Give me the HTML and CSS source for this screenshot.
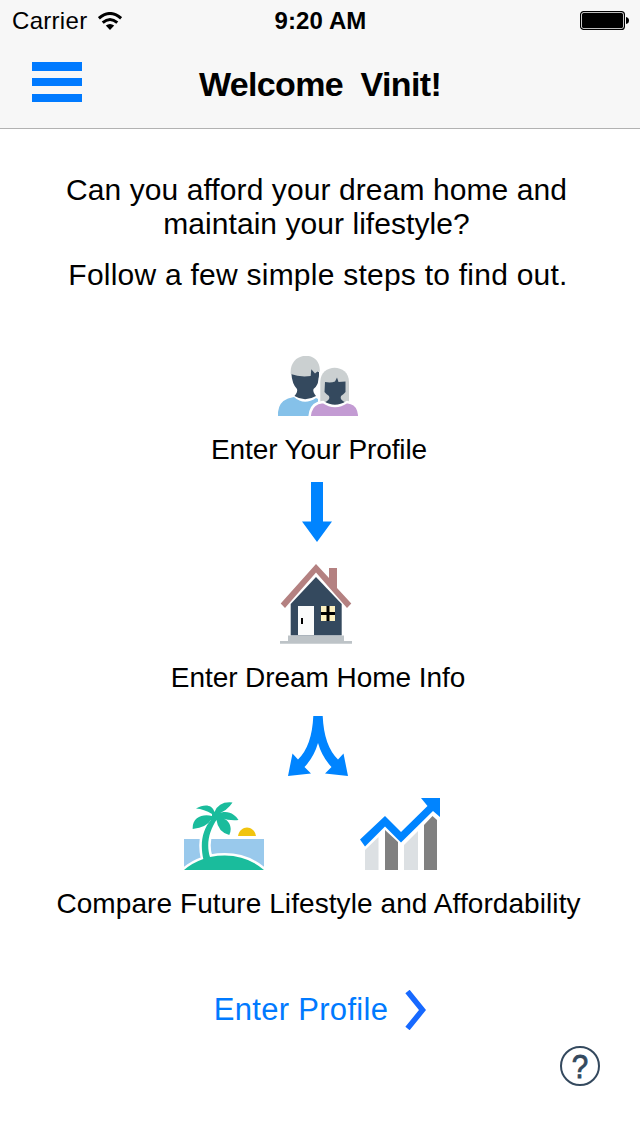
FILE: index.html
```html
<!DOCTYPE html>
<html lang="en">
<head>
<meta charset="utf-8">
<title>Welcome</title>
<link rel="stylesheet" href="styles.css">
</head>
<body>
<header class="header">
  <div class="status">
    <div class="carrier"><span class="carrier-name">Carrier</span>
      <svg class="wifi" width="24" height="18" viewBox="0 0 24 18"><g fill="none" stroke="#000" stroke-width="3"><path d="M.9 6.3Q12-3.3 23.1 6.3"/><path d="M4.7 10.6Q12 4.3 19.3 10.6"/></g><path d="M7.8 13.6Q12 10.3 16.2 13.6L12 18z"/></svg>
    </div>
    <span class="clock">9:20 AM</span>
    <svg class="battery" width="49" height="19" viewBox="0 0 49 19"><rect x=".6" y=".6" width="43.8" height="17.8" rx="3" fill="#fff" stroke="#000" stroke-width="1.2"/><rect x="2" y="2" width="41" height="15" rx="1.5"/><path d="M46 6q3 .5 3 3.5t-3 3.5z"/></svg>
  </div>
  <div class="nav">
    <button class="menu" aria-label="Menu"><i></i><i></i><i></i></button>
    <h1 class="title">Welcome&nbsp; Vinit!</h1>
  </div>
</header>
<main class="content">
  <div class="intro">
    <p class="line line-can">Can you afford your dream home and</p>
    <p class="line line-maintain">maintain your lifestyle?</p>
    <p class="line line-follow">Follow a few simple steps to find out.</p>
  </div>
  <svg class="people" width="80" height="60" viewBox="0 0 80 60">
    <path fill="#85c1e9" d="M0 60V56Q1 46 10 42.500L16 41Q26 50 38 42L40 43V47Q34 49 32 60z"/>
    <path fill="#34495e" d="M13.300 17H32V12L41 16V19Q41 29 35.500 33Q34.500 36 38 40Q27 46.500 16.500 40Q20 36 19 33Q14 28 13.300 17"/>
    <path fill="#cbd0d1" d="M12.700 18C11-6 44-6 41.700 16L40 15 37 17.500 33.300 13.300 32.700 20Q22 21.500 12.700 18"/>
    <path fill="#cbd0d1" stroke="#fff" stroke-width="4" paint-order="stroke" d="M42.300 47V26C42.300 7 71 7 71 26V47Q57 50 42.300 47"/>
    <path fill="#34495e" d="M47 26Q53 27 57 25.500L59 21.500 60.500 26 67.500 25.500V36Q66 38 63 40Q61 44 69 47Q57 54 45 47Q53 44 51 40Q48 38 46.500 36z"/>
    <path fill="#c39bd3" stroke="#fff" stroke-width="2.500" d="M31.500 62Q32 50 40 47L45 46Q57 54 69 46L73 47Q81 49 81.500 62z"/>
  </svg>
  <p class="label label-profile">Enter Your Profile</p>
  <svg class="arrow" width="30" height="60" viewBox="0 0 30 60"><path fill="#0084ff" d="M9 0H21V39.500H30L15 60 0 39.500H9z"/></svg>
  <svg class="house" width="72" height="80" viewBox="0 0 72 80">
    <path fill="#34495e" d="M36 13 10.700 40V71.500H61.700V40z"/>
    <path fill="#b48181" d="M49 4H57V24L71.300 39.500 67 44 36 8.500 5 44 .7 39.500 36 0 49 14z"/>
    <path fill="#fafbfb" d="M18 42H34V71H18z"/><path d="M21 54H23V60H21z"/>
    <path fill="#fdf1c0" d="M41 42H55V57H41z"/><path d="M46.500 42H49.500V57H46.500zM41 48H55V51H41z"/>
    <path fill="#bdc3c7" d="M8 71.500H64V77H72V79.700H0V77H8z"/>
  </svg>
  <p class="label label-home">Enter Dream Home Info</p>
  <svg class="fork" width="60" height="60" viewBox="0 0 60 60"><path fill="#0084ff" d="M25.300 0H34.700Q36 30 50 43.500L55.500 37.500 60 60 37 57.500 43.500 51Q34 41 30 27Q26 41 16.500 51L23 57.500 0 60 4.500 37.500 10 43.500Q24 30 25.300 0z"/></svg>
  <div class="compare">
    <svg class="beach" width="80" height="68" viewBox="0 0 80 68">
      <path fill="#99c9ec" d="M0 37H80V68H0z"/>
      <path fill="#f1c40f" d="M54 34C56 22.500 70 22.500 72 34z"/>
      <g stroke="#fff" stroke-width="5" paint-order="stroke" fill="#1abc9c">
        <path d="M0 68Q8 61 19.300 57C16 42 18 28 27 18L33 17C25 29 22 42 26 55Q58 49 80 68z"/>
      </g>
      <path fill="#1abc9c" d="M28 12Q20 7 12 6.500C20 2 28 2 30.500 10Q35-1 48.500 .5Q43 9 34 11.500C44 7 52 13 54.500 18Q46 19 37 16C45 17 49 25 45.300 33Q34 30 32.500 18L30 20 27 18Q23 25 8.700 27C8 15 19 11.500 28 14z"/>
    </svg>
    <svg class="chart" width="80" height="72" viewBox="0 0 80 72">
      <path fill="#dce0e3" d="M5 52 18.500 39V72H5zM44 47 58 33V72H44z"/>
      <path fill="#808080" d="M25 32 38 44V72H25zM64 27 72.500 18 77 22V72H64z"/>
      <path fill="#0084ff" d="M0 41.500 25 18 41 34 67.500 8 61 0H80V19L73 13 41 44.500 25 28.500 5 48.500z"/>
    </svg>
  </div>
  <p class="label label-compare">Compare Future Lifestyle and Affordability</p>
  <a class="next"><span class="next-text">Enter Profile</span><svg width="21" height="40" viewBox="0 0 21 40"><path d="M2.500 1.500 17.500 20 2.500 38.500" fill="none" stroke="#1769ff" stroke-width="5.500"/></svg></a>
</main>
<footer class="footer"><button class="help" aria-label="Help"><span class="help-mark">?</span></button></footer>
</body>
</html>
```

FILE: styles.css
```css
* { box-sizing: border-box; }
body { margin: 0; width: 640px; height: 1136px; overflow: hidden; background: #fff; color: #000; font-family: "Liberation Sans", Arial, sans-serif; }
p, h1 { margin: 0; white-space: nowrap; }
svg { display: block; flex: none; }
button { border: 0; padding: 0; background: none; }
.header { height: 129px; background: #f7f7f7; border-bottom: 1px solid #b2b2b2; }
.status { height: 40px; display: grid; grid-template-columns: 1fr auto 1fr; align-items: center; padding: 1px 11px 0 12px; }
.carrier { display: flex; align-items: center; gap: 11px; font-size: 24px; letter-spacing: 0.3px; }
.clock { font-size: 24px; font-weight: bold; letter-spacing: 0.1px; }
.battery { justify-self: end; }
.nav { height: 88px; display: grid; grid-template-columns: 82px 1fr 82px; align-items: center; }
.menu { width: 50px; height: 40px; margin: -4px 0 0 32px; display: flex; flex-direction: column; justify-content: space-between; }
.menu i { height: 8.500px; background: #007aff; }
.title { font-size: 34px; line-height: 40px; text-align: center; letter-spacing: -0.65px; }
.content { width: 636px; display: flex; flex-direction: column; align-items: center; padding-top: 44px; }
.intro { font-size: 30px; line-height: 34px; display: flex; flex-direction: column; align-items: center; }
.line-can { letter-spacing: 0.09px; margin-right: 3px; }
.line-maintain { letter-spacing: 0.05px; margin-right: 3px; }
.line-follow { margin-top: 17px; letter-spacing: 0.24px; }
.people { margin-top: 64px; }
.label { font-size: 28px; line-height: 34px; }
.label-profile { margin-top: 17px; margin-left: 2px; letter-spacing: -0.1px; }
.arrow { margin-top: 15px; margin-right: 2px; }
.house { margin-top: 22px; margin-right: 4px; }
.label-home { margin-top: 17px; letter-spacing: -0.06px; }
.fork { margin-top: 21px; }
.compare { display: flex; align-items: flex-end; gap: 96px; margin-top: 22px; margin-right: 12px; }
.label-compare { margin-top: 17px; margin-left: 1px; letter-spacing: 0.08px; }
.next { display: flex; align-items: center; gap: 17px; margin: 69px 0 0 4px; font-size: 31px; line-height: 38px; letter-spacing: 0.3px; color: #007aff; }
.footer { display: flex; justify-content: flex-end; padding: 16px 40px 0 0; }
.help { width: 40px; height: 40px; border: 2px solid #34495e; border-radius: 50%; font: 34px/36px "Liberation Sans", sans-serif; color: #34495e; -webkit-text-stroke: 0.9px #34495e; }
.help-mark { display: block; transform: scaleX(0.87); }
```
